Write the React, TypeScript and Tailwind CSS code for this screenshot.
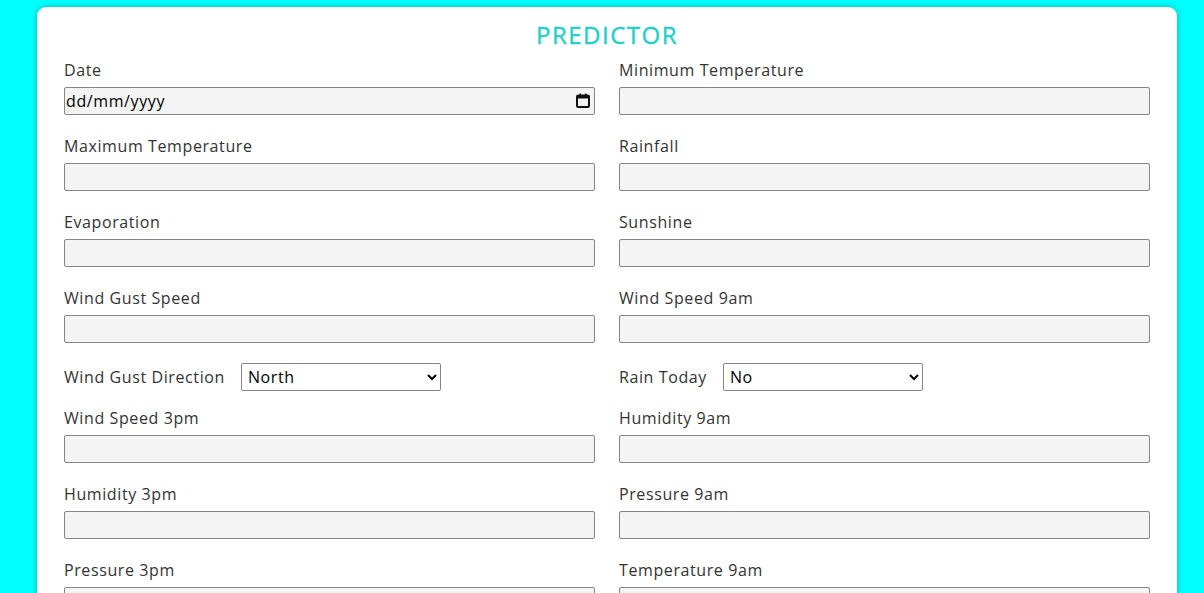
import React from 'react'

type Field = { label: string; kind?: 'date' | 'text' }

const rowsTop: [Field, Field][] = [
  [{ label: 'Date', kind: 'date' }, { label: 'Minimum Temperature' }],
  [{ label: 'Maximum Temperature' }, { label: 'Rainfall' }],
  [{ label: 'Evaporation' }, { label: 'Sunshine' }],
  [{ label: 'Wind Gust Speed' }, { label: 'Wind Speed 9am' }],
]

const rowsBottom: [Field, Field][] = [
  [{ label: 'Wind Speed 3pm' }, { label: 'Humidity 9am' }],
  [{ label: 'Humidity 3pm' }, { label: 'Pressure 9am' }],
  [{ label: 'Pressure 3pm' }, { label: 'Temperature 9am' }],
]

const inputCls =
  'block w-full h-[28px] px-[1px] rounded-[2px] border border-[#858585] bg-[#f4f4f4] text-[16px] tracking-[0.6px] text-black outline-none'

const CalendarIcon = () => (
  <svg width="14" height="15" viewBox="0 0 14 15" className="absolute right-[5px] top-[6px] pointer-events-none">
    <rect x="1" y="2.5" width="12" height="11.5" rx="1.2" fill="none" stroke="#111" strokeWidth="2" />
    <rect x="1" y="2.5" width="12" height="3" fill="#111" />
    <rect x="3.5" y="0.5" width="1.6" height="3" fill="#111" />
    <rect x="8.9" y="0.5" width="1.6" height="3" fill="#111" />
  </svg>
)

const FieldBox = ({ field }: { field: Field }) => (
  <div className="mb-[19px]">
    <label className="block h-[24px] leading-[24px] text-[16px] tracking-[0.6px] text-[#333]">{field.label}</label>
    <div className="relative mt-[5px]">
      {field.kind === 'date' ? (
        <>
          <input type="text" readOnly value="dd/mm/yyyy" className={inputCls} />
          <CalendarIcon />
        </>
      ) : (
        <input type="text" className={inputCls} />
      )}
    </div>
  </div>
)

const SelectRow = ({ label, options }: { label: string; options: string[] }) => (
  <div className="flex items-center h-[28px] mt-[1px] mb-[15px]">
    <span className="text-[16px] tracking-[0.6px] text-[#333] leading-[24px]">{label}</span>
    <select className="ml-[16px] w-[200px] h-[28px] rounded-[2px] border border-[#858585] bg-white text-[16px] tracking-[0.6px] text-black pl-[2px] outline-none">
      {options.map((o) => (
        <option key={o}>{o}</option>
      ))}
    </select>
  </div>
)

export default function App() {
  return (
    <div
      className="h-[593px] overflow-hidden bg-[#00ffff] pt-[7px]"
      style={{ fontFamily: '"Open Sans", "DejaVu Sans", sans-serif' }}
    >
      <div className="ml-[37px] w-[1140px] rounded-[9px] bg-white shadow-[0_0_6px_rgba(0,0,0,0.3)] px-[27px] pt-[13px] pb-6">
        <h1 className="text-center text-[24px] leading-[30px] font-medium text-[#1fd0c9] tracking-[1.5px] [-webkit-text-stroke:0.4px_#1fd0c9]">
          PREDICTOR
        </h1>
        <div className="mt-[8px]">
          {rowsTop.map(([a, b]) => (
            <div key={a.label} className="grid grid-cols-2 gap-x-[24px]">
              <FieldBox field={a} />
              <FieldBox field={b} />
            </div>
          ))}
          <div className="grid grid-cols-2 gap-x-[24px]">
            <SelectRow
              label="Wind Gust Direction"
              options={['North', 'North East', 'East', 'South East', 'South', 'South West', 'West', 'North West']}
            />
            <SelectRow label="Rain Today" options={['No', 'Yes']} />
          </div>
          {rowsBottom.map(([a, b]) => (
            <div key={a.label} className="grid grid-cols-2 gap-x-[24px]">
              <FieldBox field={a} />
              <FieldBox field={b} />
            </div>
          ))}
        </div>
      </div>
    </div>
  )
}
